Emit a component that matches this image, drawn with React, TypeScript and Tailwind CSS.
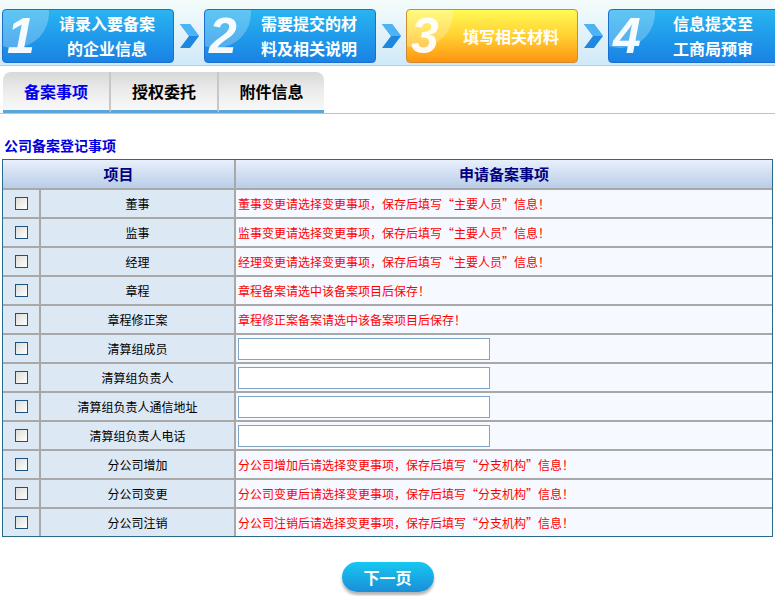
import { useState } from "react";

const font = { fontFamily: '"Noto Sans CJK SC", "Liberation Sans", sans-serif' };

type Row = { label: string; note?: string; input?: boolean };

const rows: Row[] = [
  { label: "董事", note: "董事变更请选择变更事项，保存后填写“主要人员”信息！" },
  { label: "监事", note: "监事变更请选择变更事项，保存后填写“主要人员”信息！" },
  { label: "经理", note: "经理变更请选择变更事项，保存后填写“主要人员”信息！" },
  { label: "章程", note: "章程备案请选中该备案项目后保存！" },
  { label: "章程修正案", note: "章程修正案备案请选中该备案项目后保存！" },
  { label: "清算组成员", input: true },
  { label: "清算组负责人", input: true },
  { label: "清算组负责人通信地址", input: true },
  { label: "清算组负责人电话", input: true },
  { label: "分公司增加", note: "分公司增加后请选择变更事项，保存后填写“分支机构”信息！" },
  { label: "分公司变更", note: "分公司变更后请选择变更事项，保存后填写“分支机构”信息！" },
  { label: "分公司注销", note: "分公司注销后请选择变更事项，保存后填写“分支机构”信息！" },
];

function Arrow() {
  return (
    <svg width="24" height="54" viewBox="0 0 24 54" className="shrink-0">
      <path d="M3 15 L13 15 L22 27 L13 39 L3 39 L12 27 Z" fill="#1e88e0" />
      <path d="M3 15 L13 15 L22 27 L12 27 Z" fill="#4cb4f4" />
    </svg>
  );
}

function Step({ n, lines, active }: { n: string; lines: string[]; active?: boolean }) {
  return (
    <div
      className={`relative flex h-[54px] w-[172px] shrink-0 items-center rounded-[4px] border ${
        active
          ? "border-[#d08a30] bg-gradient-to-b from-[#fffa55] via-[#ffd030] to-[#ff9410]"
          : "border-[#1a6fd0] bg-gradient-to-b from-[#2ab4f0] to-[#1a82e4]"
      }`}
    >
      <div className="absolute inset-0 overflow-hidden rounded-[4px]">
        <div className="absolute -left-6 -top-8 h-[70px] w-[70px] rotate-[20deg] rounded-[50%] bg-white/25" />
      </div>
      <span
        className="relative ml-[4px] w-[38px] text-[50px] font-bold italic leading-[50px] text-white/95"
        style={{ fontFamily: '"Liberation Sans", sans-serif' }}
      >
        {n}
      </span>
      <div className="relative flex flex-1 flex-col items-center pr-[4px] text-[16px] font-bold leading-[25px] text-white">
        {lines.map((l) => (
          <span key={l}>{l}</span>
        ))}
      </div>
    </div>
  );
}

function Checkbox() {
  const [on, setOn] = useState(false);
  return (
    <button
      onClick={() => setOn(!on)}
      className="flex h-[13px] w-[13px] items-center justify-center border border-[#1c5180] bg-gradient-to-br from-[#dcdcd8] to-white text-[10px] leading-none text-[#1c5180]"
    >
      {on ? "✓" : ""}
    </button>
  );
}

export default function App() {
  const [tab, setTab] = useState(0);
  const tabs = ["备案事项", "授权委托", "附件信息"];

  return (
    <div className="h-[596px] w-[775px] bg-white" style={font}>
      <div className="flex h-[66px] items-end gap-[3px] border-b border-[#b0cbee] bg-gradient-to-b from-[#f5fcfb] to-[#d0e9f8] pb-[2px] pl-[2px]">
        <Step n="1" lines={["请录入要备案", "的企业信息"]} />
        <Arrow />
        <Step n="2" lines={["需要提交的材", "料及相关说明"]} />
        <Arrow />
        <Step n="3" lines={["填写相关材料"]} active />
        <Arrow />
        <Step n="4" lines={["信息提交至", "工商局预审"]} />
      </div>

      <div className="mt-[6px] flex border-b border-[#bcbcf0] pl-[3px]">
        {tabs.map((t, i) => (
          <button
            key={t}
            onClick={() => setTab(i)}
            className={`flex h-[41px] items-center justify-center border-b-[3px] border-b-[#5aa6dc] bg-gradient-to-b from-[#d8d8d8] via-[#ececec] to-[#f8f8f8] text-[16px] font-bold ${
              i === 2 ? "w-[105px] rounded-tr-[8px]" : "w-[108px] border-r-2 border-r-[#c8c8c8]"
            } ${i === 0 ? "rounded-tl-[8px]" : ""} ${tab === i ? "text-[#0000ee]" : "text-black"}`}
          >
            {t}
          </button>
        ))}
      </div>

      <div className="mt-[22px] pl-[4px] text-[14px] font-bold leading-[18px] text-[#0000dd]">
        公司备案登记事项
      </div>

      <div className="mx-[2px] mt-[5px] border border-[#2b6b8a] bg-[#a8a8a8]">
        <div className="grid grid-cols-[36px_193px_1fr] gap-[2px]">
          <div className="col-span-2 flex h-[28px] items-center justify-center bg-gradient-to-b from-[#e8f0fc] to-[#b9cde8] text-[15px] font-bold text-[#000080]">
            项目
          </div>
          <div className="flex h-[28px] items-center justify-center bg-gradient-to-b from-[#e8f0fc] to-[#b9cde8] text-[15px] font-bold text-[#000080]">
            申请备案事项
          </div>
          {rows.map((r) => (
            <Line key={r.label} row={r} />
          ))}
        </div>
      </div>

      <div className="mt-[25px] flex justify-center">
        <button className="h-[30px] w-[92px] rounded-full bg-gradient-to-b from-[#16c8f2] to-[#1b8ed8] text-[16px] font-bold text-white shadow-[0_3px_3px_rgba(0,0,0,0.3)]">
          下一页
        </button>
      </div>
    </div>
  );
}

function Line({ row }: { row: Row }) {
  return (
    <>
      <div className="flex h-[27px] items-center justify-center bg-[#dde8f5]">
        <Checkbox />
      </div>
      <div className="flex h-[27px] items-center justify-center bg-[#dde8f5] text-[12px] text-black">
        {row.label}
      </div>
      <div className="flex h-[27px] items-center bg-[#f6f9ff] pl-[2px]">
        {row.input ? (
          <input className="h-[22px] w-[252px] border border-[#7fa4c4] bg-white outline-none" />
        ) : (
          <span className="text-[12px] text-[#ff0000]">{row.note}</span>
        )}
      </div>
    </>
  );
}
